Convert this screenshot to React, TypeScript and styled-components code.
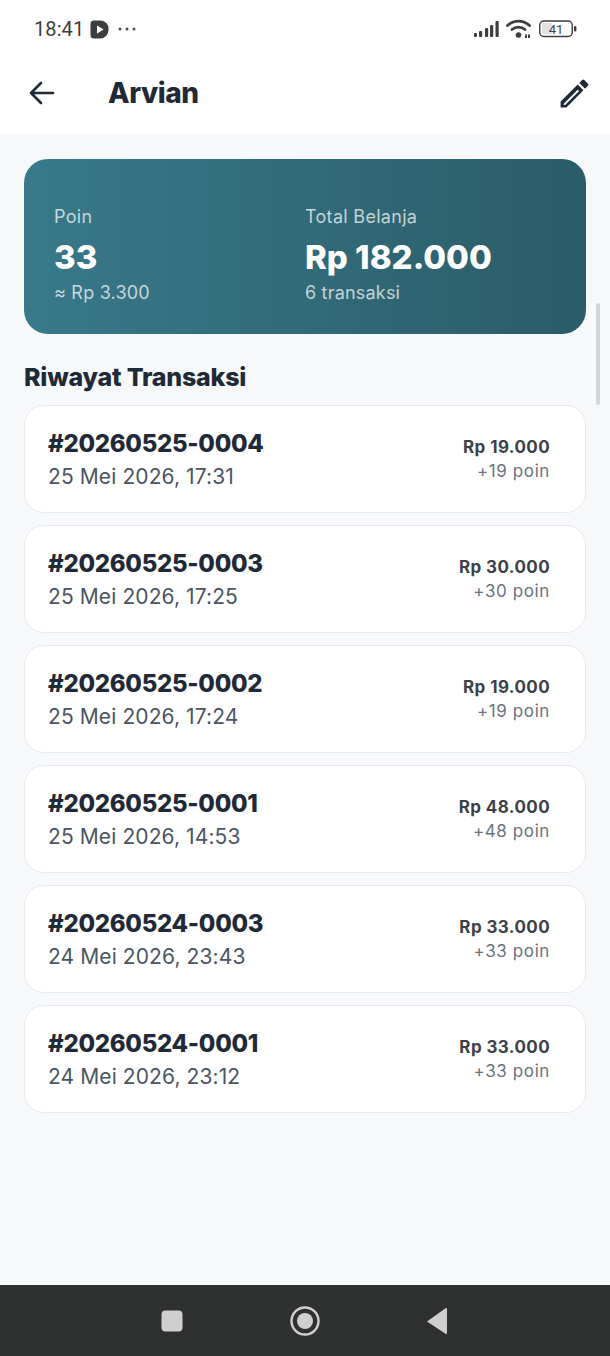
import React from "react";
import styled, { createGlobalStyle } from "styled-components";

const GlobalStyle = createGlobalStyle`
  html, body {
    margin: 0;
    padding: 0;
    background: #f6f8fa;
    font-family: "Inter", "Noto Sans", sans-serif;
  }
`;

const Page = styled.div`
  width: 610px;
  height: 1356px;
  display: flex;
  flex-direction: column;
  position: relative;
  overflow: hidden;
`;

const TopArea = styled.div`
  background: #fff;
  height: 134px;
  flex-shrink: 0;
  display: flex;
  flex-direction: column;
`;

const StatusBar = styled.div`
  height: 58px;
  padding: 0 33px 0 34px;
  display: flex;
  align-items: center;
  justify-content: space-between;
  color: #3d3d3d;
`;

const StatusLeft = styled.div`
  display: flex;
  align-items: center;
  gap: 9px;
`;

const StatusRight = styled.div`
  display: flex;
  align-items: center;
  gap: 7px;
`;

const Clock = styled.span`
  font-family: "Roboto", sans-serif;
  font-size: 20px;
  letter-spacing: 0.1px;
  margin-right: -3px;
`;

const Header = styled.div`
  height: 76px;
  box-sizing: border-box;
  padding: 0 17px 6px 28px;
  display: flex;
  align-items: center;
`;

const Title = styled.h1`
  margin: 0 0 0 52px;
  flex: 1;
  font-size: 28px;
  font-weight: 800;
  letter-spacing: -0.4px;
  color: #1f2937;
`;

const Content = styled.div`
  flex: 1;
  padding: 25px 24px 0;
`;

const SummaryCard = styled.div`
  height: 175px;
  box-sizing: border-box;
  border-radius: 24px;
  padding: 47px 30px 0;
  background: linear-gradient(90deg, #38798a, #2b5c68);
  display: grid;
  grid-template-columns: 251px 1fr;
  color: #fff;
`;

const SummaryLabel = styled.div`
  font-size: 18px;
  line-height: 22px;
  letter-spacing: 0.3px;
  color: rgba(255, 255, 255, 0.72);
`;

const SummaryValue = styled.div`
  font-size: 33px;
  line-height: 40px;
  margin-top: 9px;
  font-weight: 800;
`;

const SummaryNote = styled.div`
  font-size: 18px;
  line-height: 22px;
  letter-spacing: 0.2px;
  margin-top: 5px;
  color: rgba(255, 255, 255, 0.72);
`;

const SectionTitle = styled.h2`
  margin: 28px 0 13px;
  font-size: 25px;
  line-height: 30px;
  font-weight: 800;
  letter-spacing: -0.2px;
  color: #1f2937;
`;

const List = styled.div`
  display: flex;
  flex-direction: column;
  gap: 12px;
`;

const Row = styled.div`
  height: 108px;
  box-sizing: border-box;
  background: #fff;
  border: 1.5px solid #e6e9ed;
  border-radius: 20px;
  padding: 0 35px 0 23px;
  display: flex;
  align-items: center;
  justify-content: space-between;
`;

const RowLeft = styled.div`
  display: flex;
  flex-direction: column;
  gap: 3px;
  margin-top: 3px;
`;

const RowRight = styled.div`
  display: flex;
  flex-direction: column;
  align-items: flex-end;
  gap: 3px;
`;

const Invoice = styled.div`
  font-size: 24px;
  line-height: 30px;
  font-weight: 800;
  letter-spacing: -0.3px;
  color: #1f2937;
`;

const DateText = styled.div`
  font-size: 21px;
  line-height: 30px;
  letter-spacing: 0.1px;
  color: #4b5563;
`;

const Amount = styled.div`
  font-size: 17px;
  line-height: 21px;
  letter-spacing: 0.4px;
  font-weight: 700;
  color: #3c4149;
`;

const Points = styled.div`
  font-size: 17px;
  line-height: 21px;
  letter-spacing: 0.6px;
  color: #6b7280;
`;

const ScrollThumb = styled.div`
  position: absolute;
  left: 596px;
  top: 303px;
  width: 4px;
  height: 102px;
  border-radius: 2px;
  background: #d3d5d8;
`;

const NavBar = styled.div`
  height: 71px;
  flex-shrink: 0;
  background: #2f3130;
  display: grid;
  grid-template-columns: 133px 133px 133px;
  justify-content: center;
  justify-items: center;
  align-items: center;
`;

const BackTriangle = styled.svg`
  margin-left: -2px;
`;

const transactions = [
  { id: "#20260525-0004", date: "25 Mei 2026, 17:31", amount: "Rp 19.000", points: "+19 poin" },
  { id: "#20260525-0003", date: "25 Mei 2026, 17:25", amount: "Rp 30.000", points: "+30 poin" },
  { id: "#20260525-0002", date: "25 Mei 2026, 17:24", amount: "Rp 19.000", points: "+19 poin" },
  { id: "#20260525-0001", date: "25 Mei 2026, 14:53", amount: "Rp 48.000", points: "+48 poin" },
  { id: "#20260524-0003", date: "24 Mei 2026, 23:43", amount: "Rp 33.000", points: "+33 poin" },
  { id: "#20260524-0001", date: "24 Mei 2026, 23:12", amount: "Rp 33.000", points: "+33 poin" },
];

const App: React.FC = () => {
  return (
    <Page>
      <GlobalStyle />
      <TopArea>
        <StatusBar>
          <StatusLeft>
            <Clock>18:41</Clock>
            <svg width="19" height="19" viewBox="0 0 19 19">
              <path d="M4 .5h6.5a8 8 0 0 1 8 9 8.5 8.5 0 0 1-8 9H4A3.5 3.5 0 0 1 .5 15V4A3.5 3.5 0 0 1 4 .5z" fill="#3d3d3d" />
              <path d="M7 5.5l6.5 4-6.5 4z" fill="#fff" />
            </svg>
            <svg width="18" height="4" viewBox="0 0 18 4">
              <circle cx="2" cy="2" r="1.5" fill="#4a4a4a" />
              <circle cx="9" cy="2" r="1.5" fill="#4a4a4a" />
              <circle cx="16" cy="2" r="1.5" fill="#4a4a4a" />
            </svg>
          </StatusLeft>
          <StatusRight>
            <svg width="25" height="16" viewBox="0 0 25 16">
              <rect x="0" y="12" width="3" height="4" rx="1" fill="#3d3d3d" />
              <rect x="5" y="10" width="3.2" height="6" rx="1" fill="#3d3d3d" />
              <rect x="11" y="7" width="3.2" height="9" rx="1" fill="#3d3d3d" />
              <rect x="16" y="4" width="3.2" height="12" rx="1" fill="#3d3d3d" />
              <rect x="21.5" y="0" width="3.2" height="16" rx="1" fill="#3d3d3d" />
            </svg>
            <svg width="26" height="20" viewBox="0 0 26 20">
              <path d="M1.5 6.5a16 16 0 0 1 22 0" fill="none" stroke="#3d3d3d" strokeWidth="2.8" strokeLinecap="round" />
              <path d="M6 10.5a10 10 0 0 1 13 0" fill="none" stroke="#3d3d3d" strokeWidth="2.8" strokeLinecap="round" />
              <circle cx="12.5" cy="16" r="2.8" fill="#3d3d3d" />
              <rect x="19" y="15.5" width="2" height="3.5" fill="#3d3d3d" />
              <rect x="22" y="15.5" width="2" height="3.5" fill="#3d3d3d" />
            </svg>
            <svg width="38" height="18" viewBox="0 0 38 18">
              <rect x="0.75" y="1" width="32.5" height="15.5" rx="4" fill="none" stroke="#3d3d3d" strokeWidth="1.4" />
              <rect x="3" y="3" width="10" height="11.5" rx="1.5" fill="#e2e2e2" />
              <text x="17" y="14" textAnchor="middle" fontFamily="Roboto, sans-serif" fontSize="13" fill="#3d3d3d">41</text>
              <rect x="35" y="6" width="2.4" height="5.5" rx="1" fill="#3d3d3d" />
            </svg>
          </StatusRight>
        </StatusBar>
        <Header>
          <svg width="28" height="26" viewBox="0 0 28 26">
            <path d="M25 13H3M13 3L3 13l10 10" fill="none" stroke="#1f2937" strokeWidth="2.6" strokeLinecap="round" strokeLinejoin="round" />
          </svg>
          <Title>Arvian</Title>
          <svg width="37" height="37" viewBox="0 0 24 24">
            <path d="M3 17.25V21h3.75L17.81 9.94l-3.75-3.75L3 17.25zM5.92 19.5H5v-.92l9.06-9.06.92.92L5.92 19.5zM20.71 7.04a1 1 0 0 0 0-1.41l-2.34-2.34a1 1 0 0 0-1.41 0l-1.83 1.83 3.75 3.75 1.83-1.83z" fill="#1f2937" />
          </svg>
        </Header>
      </TopArea>
      <Content>
        <SummaryCard>
          <div>
            <SummaryLabel>Poin</SummaryLabel>
            <SummaryValue>33</SummaryValue>
            <SummaryNote>≈ Rp 3.300</SummaryNote>
          </div>
          <div>
            <SummaryLabel>Total Belanja</SummaryLabel>
            <SummaryValue>Rp 182.000</SummaryValue>
            <SummaryNote>6 transaksi</SummaryNote>
          </div>
        </SummaryCard>
        <SectionTitle>Riwayat Transaksi</SectionTitle>
        <List>
          {transactions.map((t) => (
            <Row key={t.id}>
              <RowLeft>
                <Invoice>{t.id}</Invoice>
                <DateText>{t.date}</DateText>
              </RowLeft>
              <RowRight>
                <Amount>{t.amount}</Amount>
                <Points>{t.points}</Points>
              </RowRight>
            </Row>
          ))}
        </List>
      </Content>
      <ScrollThumb />
      <NavBar>
        <svg width="24" height="24" viewBox="0 0 24 24">
          <rect x="1.5" y="1.5" width="21" height="21" rx="4" fill="#cfcfcf" />
        </svg>
        <svg width="32" height="32" viewBox="0 0 32 32">
          <circle cx="16" cy="16" r="13.5" fill="none" stroke="#cfcfcf" strokeWidth="2.4" />
          <circle cx="16" cy="16" r="8" fill="#cfcfcf" />
        </svg>
        <BackTriangle width="24" height="28" viewBox="0 0 24 28">
          <path d="M22 2v24a1 1 0 0 1-1.5.8L2 14.5 20.5 1.2A1 1 0 0 1 22 2z" fill="#cfcfcf" />
        </BackTriangle>
      </NavBar>
    </Page>
  );
};

export default App;
